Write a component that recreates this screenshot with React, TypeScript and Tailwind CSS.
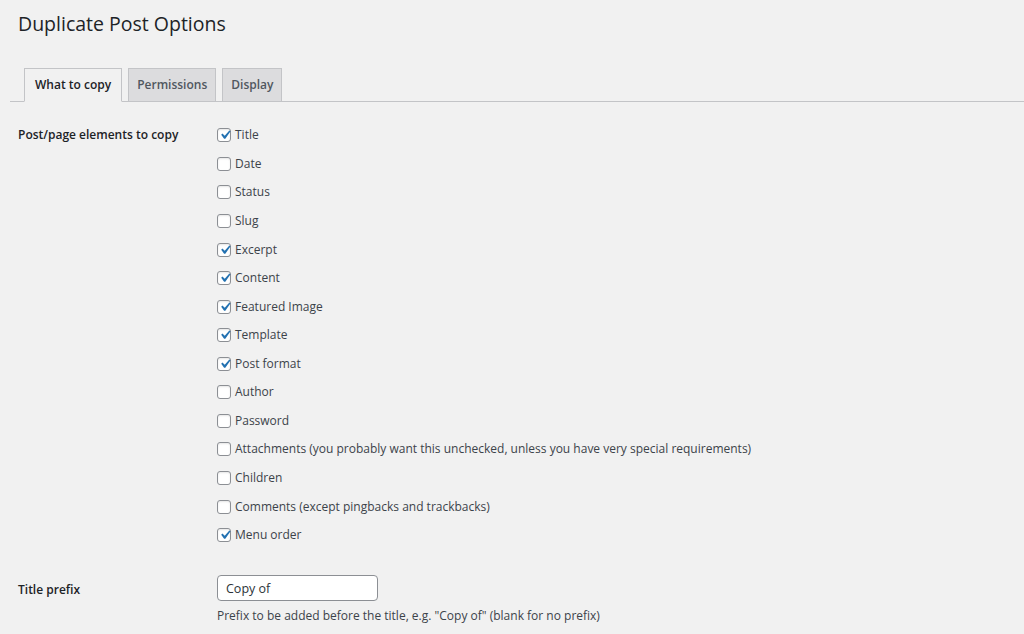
import { useState } from 'react'

const items: { label: string; checked: boolean }[] = [
  { label: 'Title', checked: true },
  { label: 'Date', checked: false },
  { label: 'Status', checked: false },
  { label: 'Slug', checked: false },
  { label: 'Excerpt', checked: true },
  { label: 'Content', checked: true },
  { label: 'Featured Image', checked: true },
  { label: 'Template', checked: true },
  { label: 'Post format', checked: true },
  { label: 'Author', checked: false },
  { label: 'Password', checked: false },
  { label: 'Attachments (you probably want this unchecked, unless you have very special requirements)', checked: false },
  { label: 'Children', checked: false },
  { label: 'Comments (except pingbacks and trackbacks)', checked: false },
  { label: 'Menu order', checked: true },
]

function Check({ checked }: { checked: boolean }) {
  return (
    <span className="relative flex h-[14px] w-[14px] shrink-0 items-center justify-center rounded-[3px] border border-[#8c8f94] bg-white shadow-[inset_0_1px_2px_rgba(0,0,0,0.1)]">
      {checked && (
        <svg viewBox="0 0 20 20" className="absolute -top-[3px] -left-[2px] h-[18px] w-[18px]">
          <path d="M14.83 4.89l1.34.94-5.81 8.38H9.02L5.78 9.67l1.34-1.25 2.57 2.4z" fill="#2271b1" />
        </svg>
      )}
    </span>
  )
}

export default function App() {
  const [tab] = useState('copy')
  const [values, setValues] = useState(items.map((i) => i.checked))

  return (
    <div className="h-[634px] w-[1024px] overflow-hidden bg-[#f1f1f1] text-[#3c434a] font-['Open_Sans',sans-serif]">
      <div className="pl-[18px] pt-[10px]">
        <h1 className="text-[19.5px] font-normal leading-[28px] text-[#1d2327]">Duplicate Post Options</h1>
      </div>

      <div className="ml-[10px] mt-[30px] flex items-end border-b border-[#c3c4c7] pl-[14px]">
        {[
          { id: 'copy', label: 'What to copy' },
          { id: 'perm', label: 'Permissions' },
          { id: 'disp', label: 'Display' },
        ].map((t) => (
          <div
            key={t.id}
            className={`-mb-px mr-[6px] flex h-[34px] items-center border border-[#c3c4c7] text-[12px] font-semibold ${
              tab === t.id ? 'border-b-[#f1f1f1] bg-[#f1f1f1] px-[10px] text-[#1d2327]' : 'bg-[#dcdcde] px-[8px] text-[#50575e]'
            }`}
          >
            {t.label}
          </div>
        ))}
      </div>

      <div className="mt-[19px] flex pl-[18px]">
        <div className="w-[199px] text-[12px] font-semibold leading-[28.6px] text-[#1d2327]">Post/page elements to copy</div>
        <div className="flex flex-col">
          {items.map((it, i) => (
            <label
              key={it.label}
              className="flex h-[28.57px] items-center gap-[4px] text-[12px]"
              onClick={() => setValues((v) => v.map((x, j) => (j === i ? !x : x)))}
            >
              <Check checked={values[i]} />
              <span>{it.label}</span>
            </label>
          ))}
        </div>
      </div>

      <div className="mt-[26px] flex pl-[18px]">
        <div className="w-[199px] pt-[6px] text-[12px] font-semibold text-[#1d2327]">Title prefix</div>
        <div className="flex flex-col">
          <input
            defaultValue="Copy of"
            className="h-[26px] w-[161px] rounded-[4px] border border-[#8c8f94] bg-white px-[8px] text-[12.5px] text-[#2c3338] outline-none"
          />
          <p className="mt-[6px] text-[12px]">Prefix to be added before the title, e.g. "Copy of" (blank for no prefix)</p>
        </div>
      </div>
    </div>
  )
}
